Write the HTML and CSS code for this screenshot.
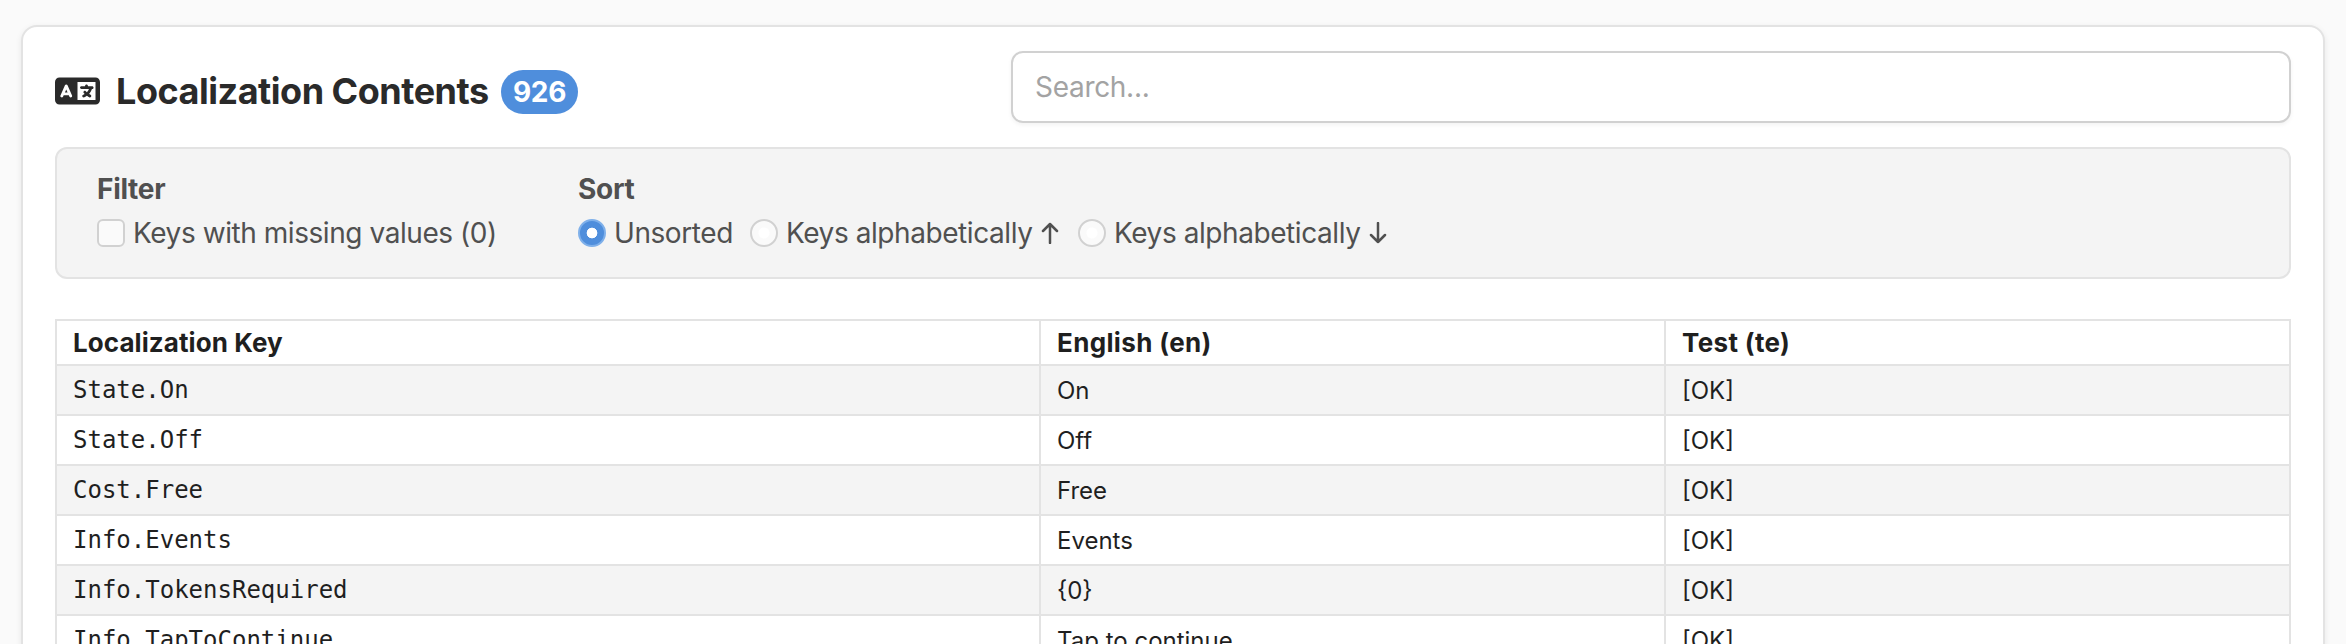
FILE: index.html
```
<!DOCTYPE html>
<html lang="en">
<head>
<meta charset="utf-8">
<title>Localization Contents</title>
<link rel="stylesheet" href="styles.css">
</head>
<body>
<main class="card">
<header class="card-header">
<svg class="icon" viewBox="0 0 640 512"><path fill="currentColor" d="M0 128C0 92.700 28.700 64 64 64H256h48 16H576c35.300 0 64 28.700 64 64V384c0 35.300-28.700 64-64 64H320 304 256 64c-35.300 0-64-28.700-64-64V128zm320 0V384H576V128H320zM178.300 175.900c-3.200-7.200-10.400-11.900-18.300-11.900s-15.100 4.700-18.300 11.900l-64 144c-4.500 10.100 .1 21.900 10.200 26.400s21.900-.1 26.400-10.200l8.900-20.100h73.600l8.900 20.100c4.500 10.100 16.300 14.700 26.400 10.200s14.700-16.300 10.200-26.400l-64-144zM160 233.200L179 276H141l19-42.800zM448 164c11 0 20 9 20 20v4h44 16c11 0 20 9 20 20s-9 20-20 20h-2l-1.600 4.500c-8.900 24.400-22.400 46.600-39.600 65.400c.9 .6 1.800 1.100 2.700 1.600l18.900 11.300c9.500 5.700 12.500 18 6.900 27.400s-18 12.500-27.400 6.900l-18.900-11.300c-4.500-2.700-8.800-5.500-13.100-8.500c-10.600 7.500-21.900 14-34 19.400l-3.600 1.600c-10.100 4.500-21.900-.1-26.400-10.200s.1-21.900 10.200-26.400l3.600-1.600c6.400-2.900 12.600-6.100 18.500-9.800l-12.200-12.200c-7.800-7.800-7.800-20.500 0-28.300s20.500-7.800 28.300 0l14.600 14.600 .5 .5c12.400-13.100 22.500-28.300 29.800-45H448 376c-11 0-20-9-20-20s9-20 20-20h52v-4c0-11 9-20 20-20z"/></svg>
<h1 class="title">Localization Contents</h1>
<span class="badge">926</span>
<input class="search" type="text" placeholder="Search...">
</header>
<section class="options">
<div class="group filter">
<b class="label">Filter</b>
<div class="choices"><label class="choice missing"><i class="box"></i>Keys with missing values (0)</label></div>
</div>
<div class="group">
<b class="label">Sort</b>
<div class="choices">
<label class="choice unsorted"><i class="radio on"></i>Unsorted</label>
<label class="choice alpha"><i class="radio"></i>Keys alphabetically<svg class="arrow" viewBox="0 0 18 22"><path d="M9 21V2M2 9l7-7 7 7"/></svg></label>
<label class="choice alpha"><i class="radio"></i>Keys alphabetically<svg class="arrow" viewBox="0 0 18 22"><path d="M9 1v19M2 13l7 7 7-7"/></svg></label>
</div>
</div>
</section>
<table class="table">
<colgroup><col class="c1"><col class="c2"><col class="c3"></colgroup>
<thead><tr><th>Localization Key</th><th class="locale">English (en)</th><th class="locale">Test (te)</th></tr></thead>
<tbody>
<tr><td class="key">State.On</td><td>On</td><td>[OK]</td></tr>
<tr><td class="key">State.Off</td><td>Off</td><td>[OK]</td></tr>
<tr><td class="key">Cost.Free</td><td>Free</td><td>[OK]</td></tr>
<tr><td class="key">Info.Events</td><td>Events</td><td>[OK]</td></tr>
<tr><td class="key">Info.TokensRequired</td><td>{0}</td><td>[OK]</td></tr>
<tr><td class="key">Info.TapToContinue</td><td>Tap to continue</td><td>[OK]</td></tr>
</tbody>
</table>
</main>
</body>
</html>
```
FILE: styles.css
```
* { box-sizing: border-box; }
html { overflow: hidden; }
body { margin: 0; height: 644px; overflow: hidden; padding: 25px 21px 0; background: #fafafa; color: #1f1f1f; font-family: Inter, "Open Sans", sans-serif; font-size: 24px; }
.card { height: 700px; padding: 24px 32px; background: #fff; border: 2px solid #e3e3e3; border-radius: 16px; box-shadow: 0 2px 6px rgba(0,0,0,.08); }
.card-header { display: flex; align-items: center; height: 72px; }
.icon { width: 45px; height: 36px; margin-top: 8px; color: #2a2a2a; }
.title { margin: 8px 0 0 16px; width: 385px; white-space: nowrap; font-size: 36px; line-height: 44px; font-weight: 700; letter-spacing: -.48px; color: #2a2a2a; }
.badge { width: 77px; height: 44px; margin-top: 10px; border-radius: 22px; background: #4f8edc; color: #fff; font-size: 28px; font-weight: 700; line-height: 44px; text-align: center; letter-spacing: -.3px; }
.search { margin-left: auto; width: 1280px; height: 72px; padding: 0 22px; border: 2px solid #d1d1d1; border-radius: 12px; background: #fff; box-shadow: 0 2px 4px rgba(0,0,0,.05); font: 28px Inter, sans-serif; letter-spacing: -.3px; }
.search::placeholder { color: #a3a3a3; }
.options { display: flex; height: 132px; margin-top: 24px; padding: 23px 40px; border: 2px solid #e3e3e3; border-radius: 12px; background: #f4f4f4; color: #505050; font-size: 28px; line-height: 34px; }
.filter { width: 481px; }
.label { display: block; font-weight: 700; height: 34px; letter-spacing: -.3px; }
.choices { display: flex; margin-top: 10px; letter-spacing: -.43px; }
.choice { display: flex; align-items: center; white-space: nowrap; }
.missing { letter-spacing: -.44px; }
.box, .radio { width: 28px; height: 28px; margin-right: 8px; border: 2px solid #d1d1d1; }
.box { border-radius: 6px; background: #fafafa; }
.radio { border-radius: 50%; background: radial-gradient(circle, #fff 0 5px, #fafafa 6px); }
.on { border-color: #7fb0ea; background: radial-gradient(circle, #fff 0 5px, #4f8edc 5.700px); }
.unsorted { width: 172px; }
.alpha { width: 328px; }
.arrow { width: 18px; height: 22px; margin-left: 9px; fill: none; stroke: currentColor; stroke-width: 2.500; stroke-linecap: round; stroke-linejoin: round; }
.table { width: 2236px; margin-top: 40px; border-collapse: collapse; table-layout: fixed; }
.c1 { width: 984px; }
.c2, .c3 { width: 625px; }
.table th, .table td { border: 2px solid #e3e3e3; padding: 0 16px; text-align: left; line-height: 30px; height: 50px; }
.table td { padding-top: 2px; }
.table th { height: 45px; font-size: 26px; font-weight: 700; letter-spacing: .08px; }
.table .locale { letter-spacing: .35px; }
.table .key { padding-top: 0; font-family: "DejaVu Sans Mono", monospace; font-size: 24px; }
.table tbody tr:nth-child(odd) { background: #f4f4f4; }
```
